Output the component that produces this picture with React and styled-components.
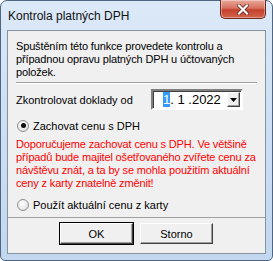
import React from 'react';
import styled, { createGlobalStyle } from 'styled-components';

const GlobalStyle = createGlobalStyle`
  html, body {
    margin: 0;
    padding: 0;
    background: #ffffff;
  }
  * {
    box-sizing: border-box;
  }
`;

const Window = styled.div`
  width: 273px;
  height: 261px;
  display: flex;
  flex-direction: column;
  border: 1px solid #4f6580;
  border-radius: 7px 7px 5px 5px;
  background: linear-gradient(to bottom, #dce9f8 0%, #cfe0f4 40%, #c2d7ef 100%);
  padding: 0 6px 6px 6px;
  font-family: 'Liberation Sans', Arial, sans-serif;
`;

const TitleBar = styled.div`
  height: 29px;
  display: flex;
  align-items: flex-start;
`;

const Title = styled.div`
  font-size: 12px;
  color: #111;
  padding: 8px 0 0 1px;
  flex: 1;
`;

const CloseButton = styled.div`
  width: 46px;
  height: 19px;
  margin-top: -1px;
  border: 1px solid #6e2a22;
  border-top: none;
  border-radius: 0 0 5px 5px;
  background: linear-gradient(to bottom, #e9a99c 0%, #d8715f 45%, #c3412c 55%, #d4654f 100%);
  display: flex;
  align-items: center;
  justify-content: center;
  box-shadow: inset 0 0 0 1px rgba(255, 255, 255, 0.35);
`;

const Client = styled.div`
  flex: 1;
  display: flex;
  flex-direction: column;
  border: 1px solid #85929f;
  background: #f0f0f0;
  font-size: 11px;
  color: #000;
`;

const Body = styled.div`
  flex: 1;
  padding: 9px 8px 0 8px;
  display: flex;
  flex-direction: column;
`;

const Para = styled.div`
  line-height: 13px;
  color: ${(p) => (p.$warn ? '#ff0000' : '#000')};
  margin-top: ${(p) => p.$top || 0}px;
  letter-spacing: -0.15px;
`;

const Separator = styled.div`
  height: 2px;
  margin-top: 3px;
  border-top: 1px solid #a0a0a0;
  border-bottom: 1px solid #ffffff;
`;

const DateRow = styled.div`
  margin-top: 5px;
  height: 21px;
  display: flex;
  align-items: center;
  justify-content: space-between;
  padding-right: 14px;
`;

const Label = styled.span`
  font-size: 11px;
`;

const Combo = styled.div`
  width: 92px;
  height: 21px;
  background: #fff;
  border: 2px solid;
  border-color: #808080 #ffffff #ffffff #808080;
  box-shadow: inset 1px 1px 0 #404040;
  display: flex;
  align-items: center;
  padding-left: 10px;
  font-size: 13px;
  position: relative;
`;

const Selected = styled.span`
  background: #3399ff;
  color: #fff;
`;

const DropButton = styled.div`
  position: absolute;
  right: 1px;
  top: 1px;
  width: 13px;
  height: 15px;
  background: #f0f0f0;
  border: 1px solid;
  border-color: #ffffff #404040 #404040 #ffffff;
  box-shadow: inset -1px -1px 0 #a0a0a0;
  display: flex;
  align-items: center;
  justify-content: center;
`;

const RadioRow = styled.label`
  margin-top: ${(p) => p.$top}px;
  height: 13px;
  display: flex;
  align-items: center;
  gap: 4px;
  padding-left: 1px;
`;

const RadioCircle = styled.span`
  width: 12px;
  height: 12px;
  border-radius: 50%;
  border: 1px solid #8e8f8f;
  background: radial-gradient(circle at 40% 35%, #ffffff 0%, #e8e8e8 60%, #cfcfcf 100%);
  display: flex;
  align-items: center;
  justify-content: center;

  &::after {
    content: '';
    width: 5px;
    height: 5px;
    border-radius: 50%;
    background: ${(p) => (p.$checked ? '#0b0b0b' : 'transparent')};
  }
`;

const Footer = styled.div`
  height: 36px;
  border-top: 1px solid #a0a0a0;
  display: flex;
  justify-content: center;
  gap: 7px;
  padding-top: 5px;
`;

const Button = styled.div`
  width: 73px;
  height: 21px;
  background: #f0f0f0;
  border: 1px solid;
  border-color: #ffffff #404040 #404040 #ffffff;
  box-shadow: inset -1px -1px 0 #a0a0a0;
  outline: ${(p) => (p.$default ? '1px solid #000' : 'none')};
  outline-offset: 0;
  display: flex;
  align-items: center;
  justify-content: center;
  font-size: 11px;
`;

const App = () => (
  <>
    <GlobalStyle />
    <Window>
      <TitleBar>
        <Title>Kontrola platných DPH</Title>
        <CloseButton>
          <svg width="12" height="11" viewBox="0 0 12 11">
            <path d="M2 1.5 L10 9.5 M10 1.5 L2 9.5" stroke="#5a1d16" strokeWidth="3.6" strokeLinecap="square" />
            <path d="M2 1.5 L10 9.5 M10 1.5 L2 9.5" stroke="#ffffff" strokeWidth="2.2" strokeLinecap="square" />
          </svg>
        </CloseButton>
      </TitleBar>
      <Client>
        <Body>
          <Para>
            Spuštěním této funkce provedete kontrolu a případnou opravu platných DPH u účtovaných položek.
          </Para>
          <Separator />
          <DateRow>
            <Label>Zkontrolovat doklady od</Label>
            <Combo>
              <Selected>1</Selected>. 1 .2022
              <DropButton>
                <svg width="7" height="4" viewBox="0 0 7 4">
                  <path d="M0 0 H7 L3.5 4 Z" fill="#000" />
                </svg>
              </DropButton>
            </Combo>
          </DateRow>
          <RadioRow $top={9}>
            <RadioCircle $checked />
            <span>Zachovat cenu s DPH</span>
          </RadioRow>
          <Para $warn $top={6}>
            Doporučujeme zachovat cenu s DPH. Ve většině případů bude majitel ošetřovaného zvířete cenu za návštěvu znát, a ta by se mohla použitím aktuální ceny z karty znatelně změnit!
          </Para>
          <RadioRow $top={8}>
            <RadioCircle />
            <span>Použít aktuální cenu z karty</span>
          </RadioRow>
        </Body>
        <Footer>
          <Button $default>OK</Button>
          <Button>Storno</Button>
        </Footer>
      </Client>
    </Window>
  </>
);

export default App;
